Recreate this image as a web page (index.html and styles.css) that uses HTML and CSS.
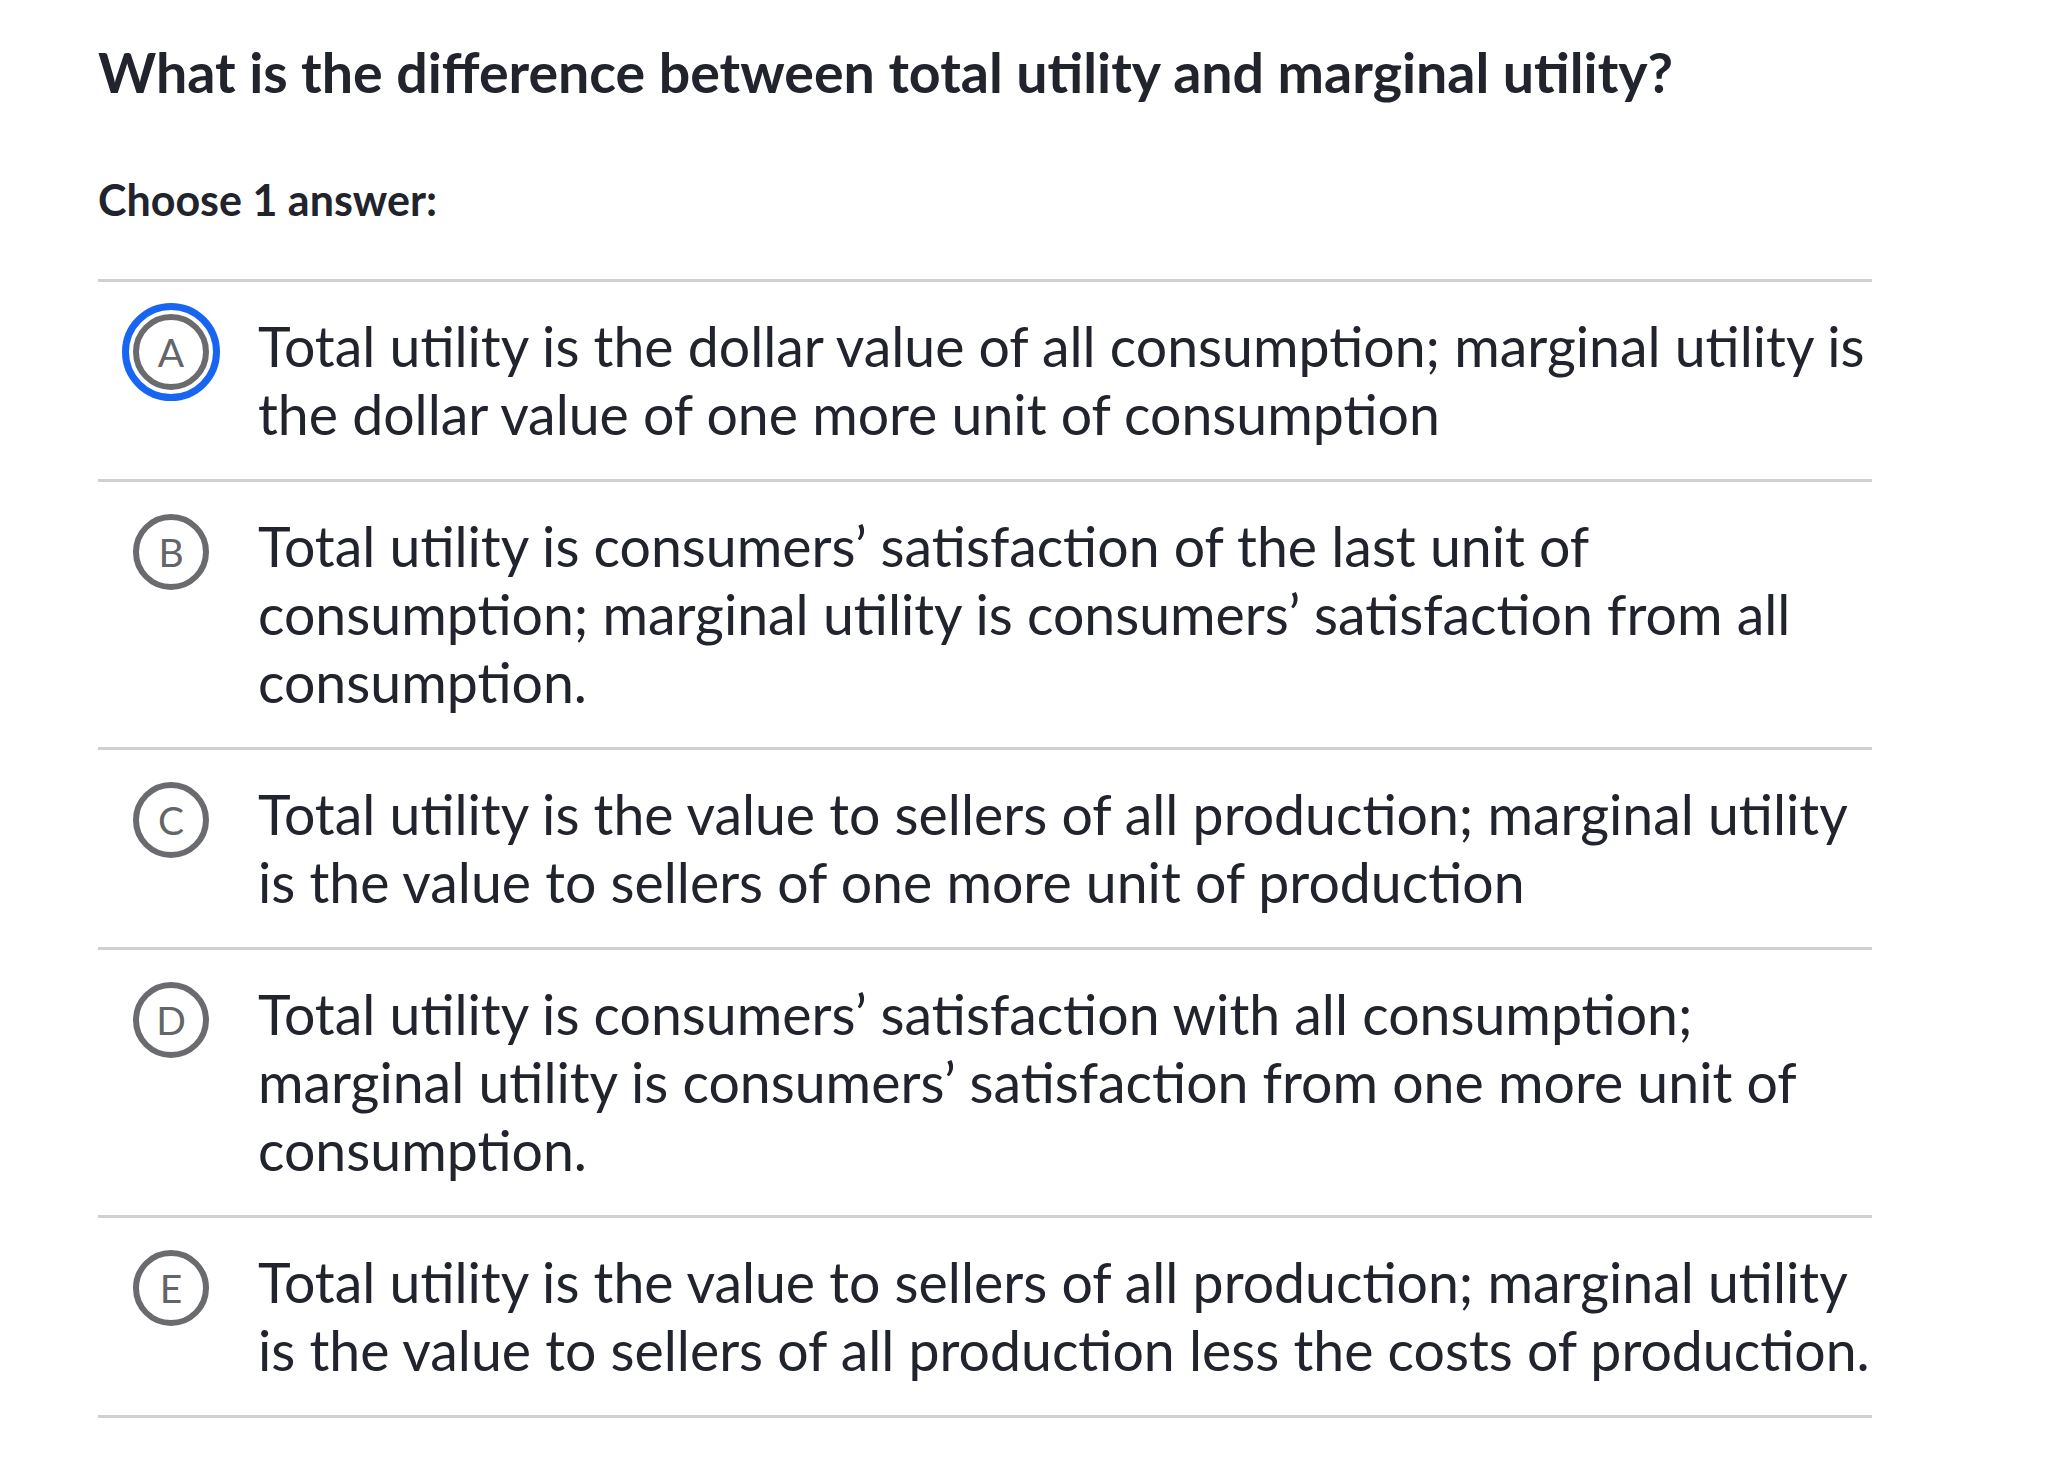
FILE: index.html
```html
<!DOCTYPE html>
<html lang="en">
<head>
<meta charset="utf-8">
<title>Question</title>
<link rel="stylesheet" href="styles.css">
</head>
<body>
<main class="page">
  <h1 class="question">What is the difference between total utility and marginal utility?</h1>
  <p class="prompt">Choose 1 answer:</p>
  <ul class="choices">
    <li class="choice">
      <div class="marker"><span class="ring selected"><span class="bubble">A</span></span></div>
      <div class="text">Total utility is the dollar value of all consumption; marginal utility is the dollar value of one more unit of consumption</div>
    </li>
    <li class="choice">
      <div class="marker"><span class="ring"><span class="bubble">B</span></span></div>
      <div class="text">Total utility is consumers’ satisfaction of the last unit of consumption; marginal utility is consumers’ satisfaction from all consumption.</div>
    </li>
    <li class="choice">
      <div class="marker"><span class="ring"><span class="bubble">C</span></span></div>
      <div class="text">Total utility is the value to sellers of all production; marginal utility is the value to sellers of one more unit of production</div>
    </li>
    <li class="choice">
      <div class="marker"><span class="ring"><span class="bubble">D</span></span></div>
      <div class="text">Total utility is consumers’ satisfaction with all consumption; marginal utility is consumers’ satisfaction from one more unit of consumption.</div>
    </li>
    <li class="choice">
      <div class="marker"><span class="ring"><span class="bubble">E</span></span></div>
      <div class="text">Total utility is the value to sellers of all production; marginal utility is the value to sellers of all production less the costs of production.</div>
    </li>
  </ul>
</main>
</body>
</html>
```
FILE: styles.css
```css
html, body {
  margin: 0;
  padding: 0;
  background: #ffffff;
}
body {
  font-family: Lato, "Open Sans", "Liberation Sans", sans-serif;
  color: #21242c;
}
.page {
  width: 1774px;
  padding: 0 0 0 98px;
}
.question {
  margin: 0;
  padding-top: 40px;
  font-size: 55.5px;
  line-height: 64px;
  font-weight: 700;
}
.prompt {
  margin: 0;
  padding-top: 70px;
  font-size: 43px;
  line-height: 52px;
  font-weight: 700;
}
.choices {
  list-style: none;
  margin: 53px 0 0 0;
  padding: 0;
  border-top: 3px solid #cfd0d2;
}
.choice {
  display: flex;
  align-items: flex-start;
  padding: 30px 0 31px;
  border-bottom: 3px solid #cfd0d2;
}
.marker {
  flex: none;
  width: 98px;
  height: 68px;
  margin-top: 6px;
  margin-left: 24px;
  margin-right: 38px;
  display: flex;
  align-items: center;
  justify-content: center;
}
.ring {
  width: 98px;
  height: 98px;
  box-sizing: border-box;
  border-radius: 50%;
  border: 7px solid transparent;
  display: flex;
  align-items: center;
  justify-content: center;
  flex: none;
}
.ring.selected {
  border-color: #1865f2;
}
.bubble {
  width: 76px;
  height: 76px;
  box-sizing: border-box;
  border-radius: 50%;
  border: 6px solid #6a6b6f;
  display: flex;
  align-items: center;
  justify-content: center;
  font-size: 39px;
  font-weight: 400;
  color: #636569;
  line-height: 1;
}
.text {
  flex: 1;
  margin-right: -14px;
  font-size: 55.4px;
  line-height: 68px;
  font-weight: 400;
}
```
